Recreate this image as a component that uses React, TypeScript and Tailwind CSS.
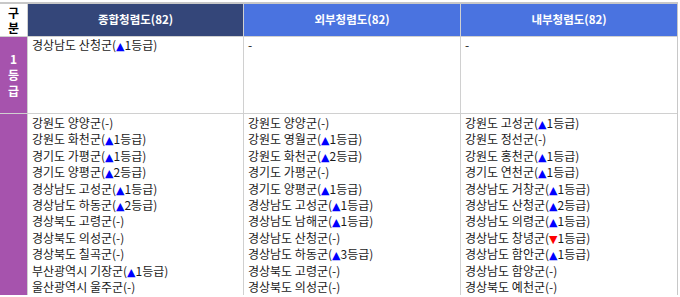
const overall = [
  "강원도 양양군(-)",
  "강원도 화천군(▲1등급)",
  "경기도 가평군(▲1등급)",
  "경기도 양평군(▲2등급)",
  "경상남도 고성군(▲1등급)",
  "경상남도 하동군(▲2등급)",
  "경상북도 고령군(-)",
  "경상북도 의성군(-)",
  "경상북도 칠곡군(-)",
  "부산광역시 기장군(▲1등급)",
  "울산광역시 울주군(-)",
];

const external = [
  "강원도 양양군(-)",
  "강원도 영월군(▲1등급)",
  "강원도 화천군(▲2등급)",
  "경기도 가평군(-)",
  "경기도 양평군(▲1등급)",
  "경상남도 고성군(▲1등급)",
  "경상남도 남해군(▲1등급)",
  "경상남도 산청군(-)",
  "경상남도 하동군(▲3등급)",
  "경상북도 고령군(-)",
  "경상북도 의성군(-)",
];

const internal = [
  "강원도 고성군(▲1등급)",
  "강원도 정선군(-)",
  "강원도 홍천군(▲1등급)",
  "경기도 연천군(▲1등급)",
  "경상남도 거창군(▲1등급)",
  "경상남도 산청군(▲2등급)",
  "경상남도 의령군(▲1등급)",
  "경상남도 창녕군(▼1등급)",
  "경상남도 함안군(▲1등급)",
  "경상남도 함양군(-)",
  "경상북도 예천군(-)",
];

// splits the arrow out so it can be coloured
const Item = ({ text }: { text: string }) => {
  const m = text.match(/^(.*\()([▲▼])(.*)$/);
  if (!m) return <div className="h-[16.4px] whitespace-nowrap">{text}</div>;
  return (
    <div className="h-[16.4px] whitespace-nowrap">
      {m[1]}
      <span
        className={`text-[11px] leading-none ${m[2] === "▲" ? "text-[#0000ff]" : "text-[#ff0000]"}`}
        style={{ fontFamily: '"DejaVu Sans", sans-serif' }}
      >
        {m[2]}
      </span>
      {m[3]}
    </div>
  );
};

const List = ({ items }: { items: string[] }) => (
  <div className="bg-white pl-[4px] pt-[1px] leading-[16.4px]">
    {items.map((t) => (
      <Item key={t} text={t} />
    ))}
  </div>
);

export default function App() {
  return (
    <div
      className="h-[297px] w-[680px] overflow-hidden bg-white text-[12px] text-[#1a1a1a]"
      style={{ fontFamily: '"Noto Sans CJK KR", "Noto Sans", sans-serif' }}
    >
      <div className="mt-[2px] w-[678px] border-t-2 border-r border-[#c8c8c8] bg-[#d0d0d0]">
        <div className="grid grid-cols-[27px_215px_216px_216px] grid-rows-[32px_76px_auto] gap-px">
          <div className="flex flex-col items-center justify-center bg-white text-[12px] font-bold leading-[15px] text-black">
            <span>구</span>
            <span>분</span>
          </div>
          <div className="flex items-center justify-center bg-[#344679] text-[11.5px] font-bold text-white">
            종합청렴도(82)
          </div>
          <div className="flex items-center justify-center bg-[#4a73e0] text-[11.5px] font-bold text-white">
            외부청렴도(82)
          </div>
          <div className="flex items-center justify-center bg-[#4a73e0] text-[11.5px] font-bold text-white">
            내부청렴도(82)
          </div>

          <div className="flex flex-col items-center justify-center bg-[#a653ad] text-[12px] font-bold leading-[16px] text-white">
            <span>1</span>
            <span>등</span>
            <span>급</span>
          </div>
          <div className="bg-white pl-[4px] leading-[16.4px]">
            <Item text="경상남도 산청군(▲1등급)" />
          </div>
          <div className="bg-white pl-[4px] leading-[16.4px]">-</div>
          <div className="bg-white pl-[4px] leading-[16.4px]">-</div>

          <div className="bg-[#a653ad]" />
          <List items={overall} />
          <List items={external} />
          <List items={internal} />
        </div>
      </div>
    </div>
  );
}
